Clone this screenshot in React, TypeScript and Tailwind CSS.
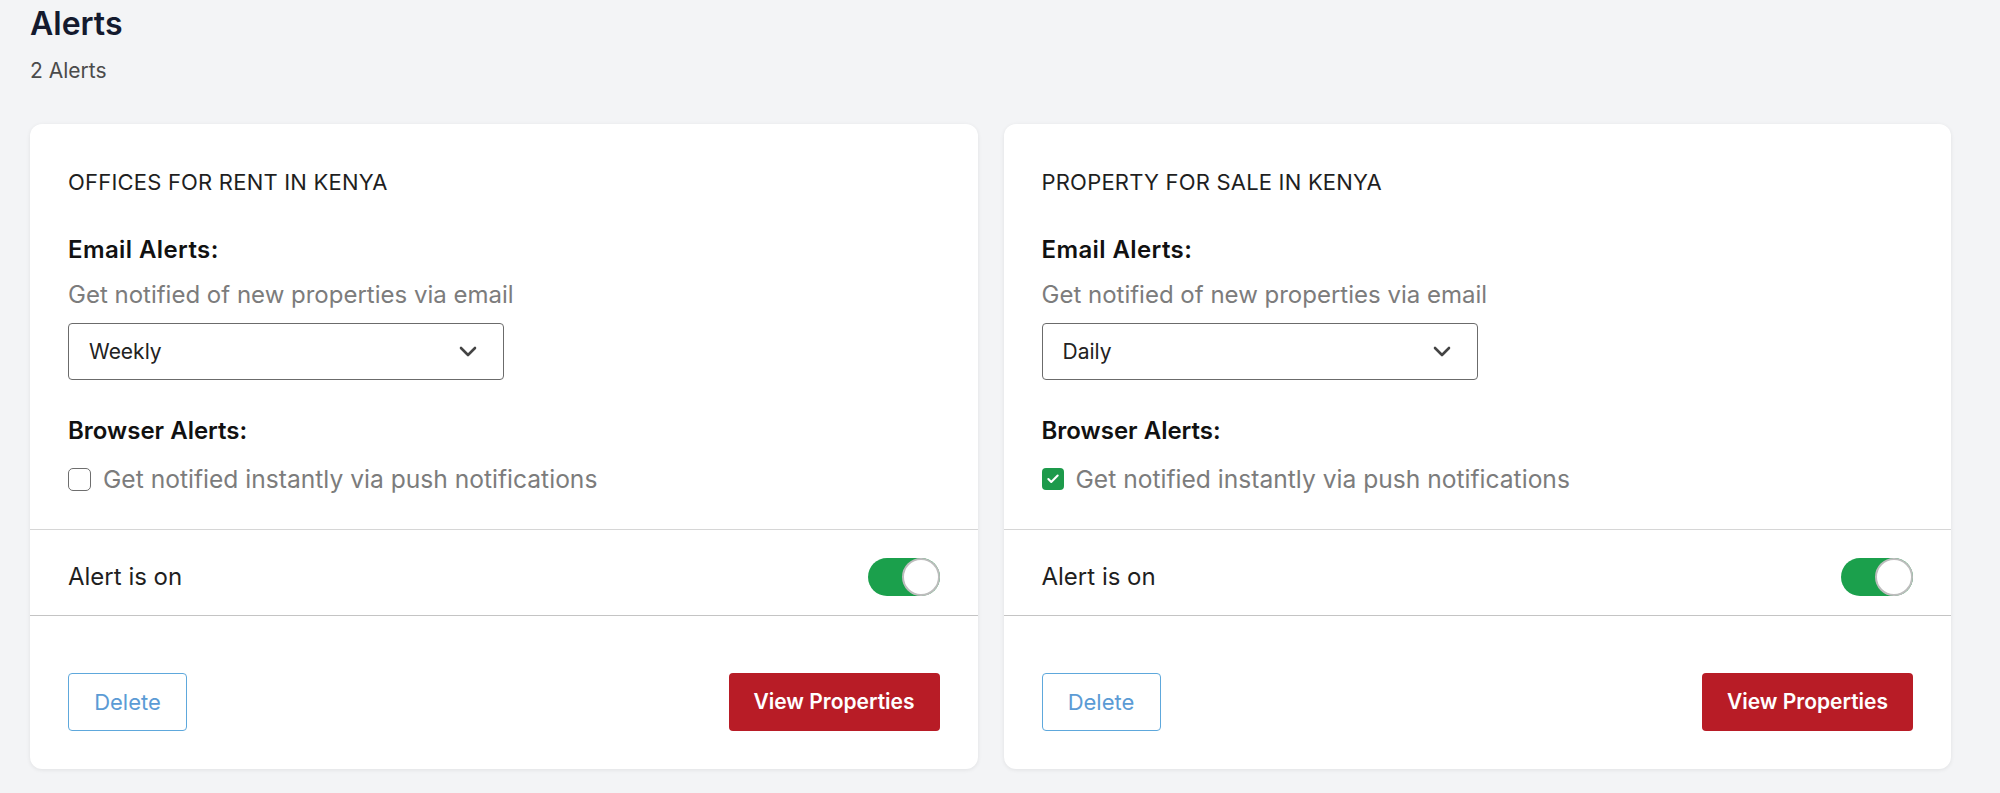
import { Check } from 'lucide-react';

interface AlertCardProps {
  title: string;
  frequency: string;
  push: boolean;
}

const AlertCard = ({ title, frequency, push }: AlertCardProps) => {
  return (
    <div className="bg-white rounded-[12px] shadow-[0_1px_4px_rgba(0,0,0,0.08)] flex flex-col">
      {/* Settings */}
      <div className="px-[38px] pt-[44px] pb-[36px] border-b border-[#d6d6d6]">
        <div className="text-[22px] leading-[28px] text-[#1f1f1f] tracking-[0.2px]">{title}</div>
        <div className="mt-[40px] text-[24px] leading-[28px] font-semibold text-[#111] tracking-[0.4px]">Email Alerts:</div>
        <div className="mt-[17px] text-[24px] leading-[28px] text-[#7c7c7c]">Get notified of new properties via email</div>
        <div className="mt-[14px] w-[436px] h-[57px] border border-[#6b6b6b] rounded-[4px] flex items-center justify-between pl-[20px] pr-[26px]">
          <span className="text-[21px] text-[#222]">{frequency}</span>
          <svg width="18" height="11" viewBox="0 0 18 11" fill="none">
            <path d="M2 2l7 7 7-7" stroke="#444" strokeWidth="2.6" strokeLinecap="round" strokeLinejoin="round" />
          </svg>
        </div>
        <div className="mt-[37px] text-[24px] leading-[28px] font-semibold text-[#111]">Browser Alerts:</div>
        <div className="mt-[20px] flex items-center gap-[12px] h-[28px]">
          {push ? (
            <span className="w-[22px] h-[22px] rounded-[4px] bg-[#1d9a4b] flex items-center justify-center">
              <Check className="w-[14px] h-[14px] text-white" strokeWidth={3.5} />
            </span>
          ) : (
            <span className="w-[23px] h-[23px] rounded-[5px] border-[1.5px] border-[#6e6e6e] bg-white" />
          )}
          <span className="text-[24.6px] text-[#7c7c7c]">Get notified instantly via push notifications</span>
        </div>
      </div>

      {/* Toggle */}
      <div className="px-[38px] h-[86px] pt-[8px] flex items-center justify-between border-b border-[#c4c4c4]">
        <span className="text-[24px] text-[#1f1f1f]">Alert is on</span>
        <div className="w-[72px] h-[38px] rounded-full bg-[#1ba04c] flex items-center justify-end">
          <span className="w-[38px] h-[38px] rounded-full bg-white border-2 border-[#bdbdbd]" />
        </div>
      </div>

      {/* Actions */}
      <div className="px-[38px] pt-[57px] pb-[38px] flex items-center justify-between">
        <button className="w-[119px] h-[58px] border border-[#5ea8dc] rounded-[4px] text-[22px] text-[#5b9bd5]">
          Delete
        </button>
        <button className="w-[211px] h-[58px] bg-[#b81c26] rounded-[4px] text-[21px] font-semibold text-white">
          View Properties
        </button>
      </div>
    </div>
  );
};

export default function App() {
  return (
    <div className="min-h-screen bg-[#f3f4f6] pl-[30px] pr-[49px] pt-[4px] pb-[24px] font-['Inter',sans-serif]">
      <h1 className="text-[32px] leading-[40px] font-semibold text-[#141a2e]">Alerts</h1>
      <p className="mt-[13px] text-[21px] leading-[28px] text-[#4b4b4b]">2 Alerts</p>
      <div className="mt-[39px] grid grid-cols-2 gap-[26px]">
        <AlertCard title="OFFICES FOR RENT IN KENYA" frequency="Weekly" push={false} />
        <AlertCard title="PROPERTY FOR SALE IN KENYA" frequency="Daily" push={true} />
      </div>
    </div>
  );
}
